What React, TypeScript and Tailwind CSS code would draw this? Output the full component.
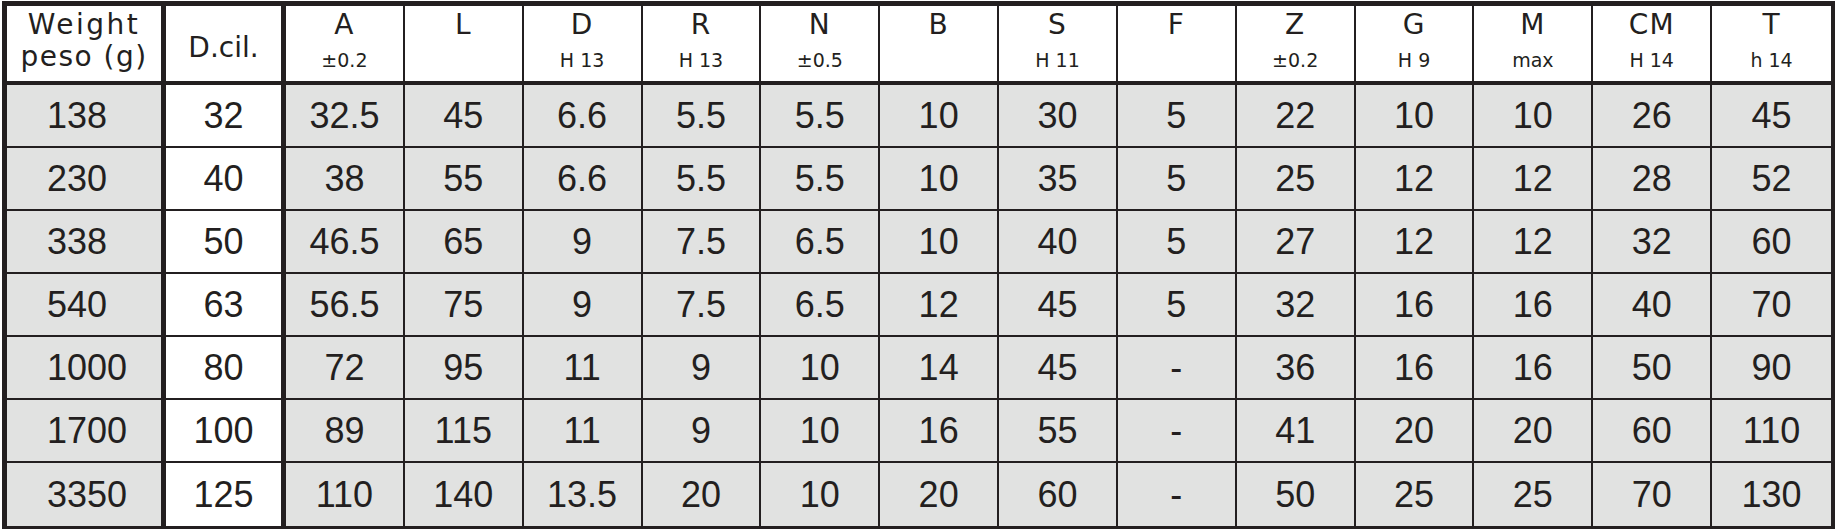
import React from "react";

interface Column {
  label: string;
  sub?: string;
}

// dimension columns after Weight / D.cil.
const columns: Column[] = [
  { label: "A", sub: "±0.2" },
  { label: "L" },
  { label: "D", sub: "H 13" },
  { label: "R", sub: "H 13" },
  { label: "N", sub: "±0.5" },
  { label: "B" },
  { label: "S", sub: "H 11" },
  { label: "F" },
  { label: "Z", sub: "±0.2" },
  { label: "G", sub: "H 9" },
  { label: "M", sub: "max" },
  { label: "CM", sub: "H 14" },
  { label: "T", sub: "h 14" },
];

const rows: string[][] = [
  ["138", "32", "32.5", "45", "6.6", "5.5", "5.5", "10", "30", "5", "22", "10", "10", "26", "45"],
  ["230", "40", "38", "55", "6.6", "5.5", "5.5", "10", "35", "5", "25", "12", "12", "28", "52"],
  ["338", "50", "46.5", "65", "9", "7.5", "6.5", "10", "40", "5", "27", "12", "12", "32", "60"],
  ["540", "63", "56.5", "75", "9", "7.5", "6.5", "12", "45", "5", "32", "16", "16", "40", "70"],
  ["1000", "80", "72", "95", "11", "9", "10", "14", "45", "-", "36", "16", "16", "50", "90"],
  ["1700", "100", "89", "115", "11", "9", "10", "16", "55", "-", "41", "20", "20", "60", "110"],
  ["3350", "125", "110", "140", "13.5", "20", "10", "20", "60", "-", "50", "25", "25", "70", "130"],
];

const rightBorder = (col: number) => {
  if (col < 2) return "border-r-[5px]";
  if (col === 14) return "";
  return "border-r-2";
};

const App: React.FC = () => {
  return (
    <div className="w-[1838px] h-[532px] bg-white pl-[2px] pt-[1px] text-[#231f20] font-['DejaVu_Sans',sans-serif]">
      <div className="w-[1833px] h-[528px] grid grid-cols-[159px_120px_repeat(13,minmax(0,1fr))] grid-rows-[79px_repeat(7,minmax(0,1fr))] border-l-[5px] border-t-[5px] border-r-4 border-b-[3px] border-[#231f20]">
        {/* header */}
        <div className={`flex flex-col items-center pt-[3px] border-b-4 border-[#231f20] ${rightBorder(0)}`}>
          <span className="text-[28px] leading-[32px] tracking-[2.5px]">Weight</span>
          <span className="text-[28px] leading-[32px] tracking-[1.5px]">peso (g)</span>
        </div>
        <div className={`flex items-center justify-center pt-[9px] border-b-4 border-[#231f20] ${rightBorder(1)}`}>
          <span className="text-[28px] leading-[32px]">D.cil.</span>
        </div>
        {columns.map((c, i) => (
          <div
            key={c.label}
            className={`flex flex-col items-center pt-[3px] border-b-4 border-[#231f20] ${rightBorder(i + 2)}`}
          >
            <span className="text-[28px] leading-[32px] tracking-[1px]">{c.label}</span>
            {c.sub && <span className="mt-[7px] text-[19px] leading-[24px]">{c.sub}</span>}
          </div>
        ))}

        {/* data rows */}
        {rows.map((row, r) =>
          row.map((val, i) => (
            <div
              key={`${r}-${i}`}
              className={`flex items-center border-[#231f20] ${rightBorder(i)} ${r < rows.length - 1 ? "border-b-2" : ""} ${
                i === 1 ? "bg-white" : "bg-[#e1e2e1]"
              } ${i === 0 ? "justify-start pl-[40px]" : "justify-center"}`}
            >
              <span className="text-[36px] leading-none font-['Liberation_Sans_Narrow','Liberation_Sans',sans-serif]">
                {val}
              </span>
            </div>
          ))
        )}
      </div>
    </div>
  );
};

export default App;
